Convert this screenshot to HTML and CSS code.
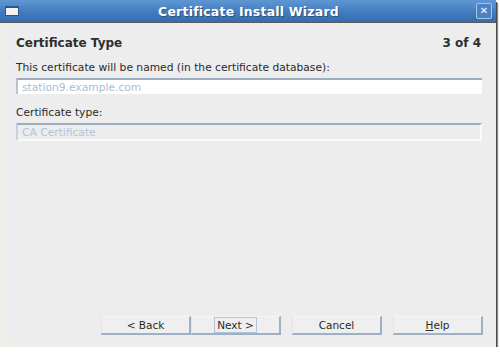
FILE: index.html
```html
<!DOCTYPE html>
<html lang="en">
<head>
    <meta charset="UTF-8">
    <title>Certificate Install Wizard</title>
    <link rel="stylesheet" href="styles.css">
</head>
<body>
    <div class="window">
        <div class="titlebar">
            <div class="win-icon"></div>
            <div class="title">Certificate Install Wizard</div>
            <div class="close-btn">&#x2715;</div>
        </div>
        <div class="content">
            <div class="header">
                <h1>Certificate Type</h1>
                <span class="step">3 of 4</span>
            </div>
            <label class="field-label">This certificate will be named (in the certificate database):</label>
            <div class="field">station9.example.com</div>
            <label class="field-label">Certificate type:</label>
            <div class="field disabled">CA Certificate</div>
            <div class="spacer"></div>
            <div class="buttons">
                <div class="btn-group">
                    <button class="btn">&lt; Back</button>
                    <button class="btn"><span class="focus">Next &gt;</span></button>
                </div>
                <button class="btn">Cancel</button>
                <button class="btn"><u>H</u>elp</button>
            </div>
        </div>
    </div>
</body>
</html>
```

FILE: styles.css
```css
body {
    margin: 0;
    background-color: #fff;
    font-family: "DejaVu Sans", sans-serif;
}
.window {
    width: 496px;
    height: 347px;
    display: flex;
    flex-direction: column;
    background-color: #ededed;
    border-left: 2px solid #f3eee4;
    border-bottom: 1px solid #f3eee4;
    box-sizing: border-box;
    box-shadow: 1px 2px 0 #4a4a4a, 2px 3px 1px #8a8a8a;
}
.titlebar {
    height: 22px;
    margin-left: -2px;
    display: flex;
    align-items: center;
    background: linear-gradient(#5f97d4, #4079bd 60%, #356cae);
    border-bottom: 1px solid #5a5a5a;
    color: #fff;
}
.win-icon {
    width: 12px;
    height: 7px;
    margin-left: 5px;
    background-color: #f2f2f2;
    border: 1px solid #2c5688;
    border-top-width: 2px;
}
.title {
    flex: 1;
    text-align: center;
    padding-left: 2px;
    font-weight: bold;
    font-size: 12.5px;
    letter-spacing: 0.2px;
    text-shadow: 1px 1px 0 #2b5380;
}
.close-btn {
    width: 14px;
    height: 14px;
    margin-right: 4px;
    border: 1px solid #a9c4e4;
    border-radius: 2px;
    background-color: #4a82c4;
    font-size: 10px;
    font-weight: bold;
    line-height: 14px;
    text-align: center;
}
.content {
    flex: 1;
    display: flex;
    flex-direction: column;
    padding: 13px 14px 11px 14px;
    font-size: 10.7px;
    color: #2a2a2a;
}
.header {
    display: flex;
    justify-content: space-between;
    align-items: baseline;
    margin-bottom: 12px;
    line-height: 14px;
}
.header h1 {
    margin: 0;
    font-size: 12px;
    font-weight: bold;
    color: #2e2e2e;
}
.step {
    font-size: 12px;
    font-weight: bold;
    color: #2e2e2e;
    margin-right: 1px;
}
.field-label {
    display: block;
    line-height: 12px;
    margin-bottom: 4px;
}
.field {
    height: 14px;
    margin-bottom: 13px;
    padding-left: 4px;
    line-height: 15px;
    background-color: #fff;
    border-top: 2px solid #9cadc2;
    border-left: 2px solid #b7c4d3;
    color: #a9bcd6;
}
.field.disabled {
    background-color: #ededed;
    border-right: 2px solid #fafafa;
    border-bottom: 2px solid #fafafa;
    border-left-color: #c8d2dc;
    color: #b3c4da;
}
.spacer {
    flex: 1;
}
.buttons {
    display: flex;
    justify-content: flex-end;
    gap: 11px;
    margin-right: -1px;
}
.btn-group {
    display: flex;
}
.btn {
    width: 90px;
    height: 19px;
    padding: 0;
    font-family: "DejaVu Sans", sans-serif;
    font-size: 10.5px;
    color: #2a2a2a;
    background-color: #efefef;
    border: none;
    border-top: 1px solid #f6f6f6;
    border-left: 1px solid #e4e4e4;
    border-right: 2px solid #9fb0c6;
    border-bottom: 2px solid #9fb0c6;
}
.focus {
    padding: 1px 2px;
    border: 1px solid #b4c4d8;
}
```
